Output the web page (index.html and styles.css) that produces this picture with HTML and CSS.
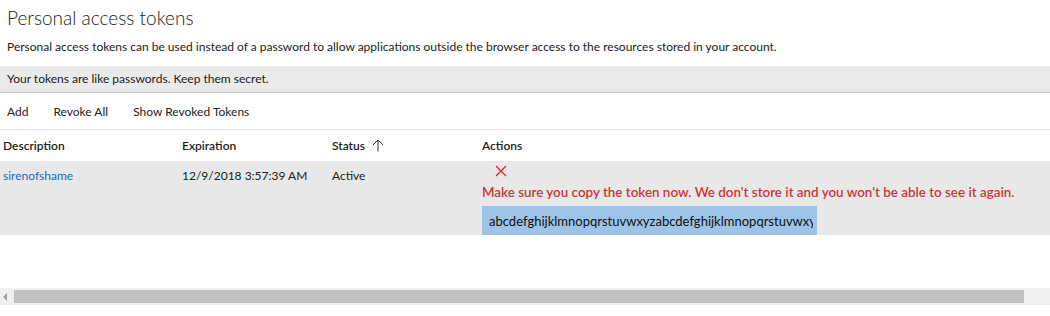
FILE: index.html
```html
<!DOCTYPE html>
<html lang="en">
<head>
    <meta charset="UTF-8">
    <title>Personal access tokens</title>
    <link rel="stylesheet" href="styles.css">
</head>
<body>
    <div class="page">
        <h1 class="title">Personal access tokens</h1>
        <p class="intro">Personal access tokens can be used instead of a password to allow applications outside the browser access to the resources stored in your account.</p>

        <div class="notice">Your tokens are like passwords. Keep them secret.</div>

        <div class="toolbar">
            <button class="tool">Add</button>
            <button class="tool">Revoke All</button>
            <button class="tool">Show Revoked Tokens</button>
        </div>

        <div class="grid-scroll">
            <table class="tokens">
                <thead>
                    <tr>
                        <th class="col-desc">Description</th>
                        <th class="col-exp">Expiration</th>
                        <th class="col-status">Status
                            <svg class="sort-icon" width="12" height="13" viewBox="0 0 12 13">
                                <path d="M6 12.5V1M1 6l5-5 5 5" fill="none" stroke="#333" stroke-width="1"/>
                            </svg>
                        </th>
                        <th class="col-actions">Actions</th>
                    </tr>
                </thead>
                <tbody>
                    <tr class="selected">
                        <td><a href="#" class="token-name">sirenofshame</a></td>
                        <td>12/9/2018 3:57:39 AM</td>
                        <td>Active</td>
                        <td class="actions">
                            <button class="close-btn" aria-label="Dismiss">
                                <svg width="12" height="12" viewBox="0 0 12 12">
                                    <path d="M1 1l10 10M11 1L1 11" stroke="#e81123" stroke-width="1.1" fill="none"/>
                                </svg>
                            </button>
                            <div class="warning">Make sure you copy the token now. We don't store it and you won't be able to see it again.</div>
                            <input class="token-value" type="text" readonly value="abcdefghijklmnopqrstuvwxyzabcdefghijklmnopqrstuvwxyz">
                        </td>
                    </tr>
                </tbody>
            </table>
        </div>

        <div class="hscroll">
            <span class="hscroll-arrow"></span>
            <div class="hscroll-thumb"></div>
        </div>
    </div>
</body>
</html>
```

FILE: styles.css
```css
:root {
    --text-color: #212121;
    --muted-bg: #eaeaea;
    --row-bg: #e8e8e8;
    --border-color: #c8c8c8;
    --link-color: #106ebe;
    --error-color: #d13438;
    --token-bg: #9dc3e6;
}

* {
    box-sizing: border-box;
    margin: 0;
    padding: 0;
}

body {
    font-family: "Segoe UI", Lato, "Noto Sans", sans-serif;
    font-size: 12px;
    color: var(--text-color);
    background: #ffffff;
}

.page {
    width: 1050px;
}

.title {
    font-size: 19px;
    font-weight: 300;
    padding: 5px 7px 0;
    height: 36px;
    line-height: 26px;
}

.intro {
    padding: 0 7px;
    height: 30px;
    line-height: 22px;
}

.notice {
    background: var(--muted-bg);
    border-bottom: 1px solid var(--border-color);
    height: 27px;
    line-height: 26px;
    padding: 0 7px;
}

.toolbar {
    display: flex;
    gap: 25px;
    height: 37px;
    padding: 0 7px;
    align-items: center;
    border-bottom: 1px solid #e0e0e0;
}

.tool {
    font: inherit;
    color: var(--text-color);
    background: none;
    border: none;
    cursor: pointer;
}

.grid-scroll {
    height: 158px;
}

.tokens {
    border-collapse: collapse;
    width: 1050px;
    table-layout: fixed;
}

.tokens th {
    text-align: left;
    font-weight: 600;
    height: 31px;
    padding: 0 3px;
    vertical-align: middle;
}

.col-desc { width: 179px; }
.col-exp { width: 150px; }
.col-status { width: 150px; }

.sort-icon {
    margin-left: 4px;
    vertical-align: -2px;
}

.tokens td {
    vertical-align: top;
    padding: 6px 3px 0;
    line-height: 18px;
}

.tokens td.actions {
    padding: 3px 3px 0;
}

.selected {
    background: var(--row-bg);
}

.token-name {
    color: var(--link-color);
    text-decoration: none;
}

.close-btn {
    display: block;
    background: none;
    border: none;
    margin-left: 13px;
    height: 16px;
    cursor: pointer;
}

.warning {
    color: var(--error-color);
    font-weight: 600;
    font-size: 13.4px;
    margin-top: 3px;
    line-height: 18px;
}

.token-value {
    display: block;
    margin-top: 5px;
    width: 335px;
    height: 29px;
    border: none;
    outline: none;
    background: var(--token-bg);
    font: inherit;
    font-size: 13px;
    color: #111;
    padding: 0 4px 0 7px;
}

.hscroll {
    display: flex;
    align-items: center;
    height: 17px;
    background: #f0f0f0;
    padding: 0 26px 0 3px;
}

.hscroll-arrow {
    width: 0;
    height: 0;
    border-top: 4px solid transparent;
    border-bottom: 4px solid transparent;
    border-right: 4px solid #a0a0a0;
    margin-right: 7px;
}

.hscroll-thumb {
    flex: 1;
    height: 13px;
    background: #c1c1c1;
}
```
